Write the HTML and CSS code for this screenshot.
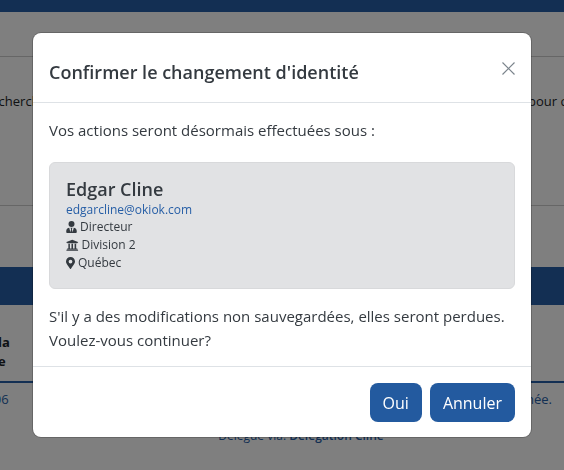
FILE: index.html
```html
<!DOCTYPE html>
<html lang="fr">
<head>
<meta charset="utf-8">
<title>Changement d'identité</title>
<link rel="stylesheet" href="styles.css">
</head>
<body>
<div class="page">
  <div class="topbar"></div>
  <div class="toolbar"></div>
  <div class="search-row">
    <span class="search-left">rechercher</span>
    <span class="search-right">pour changer</span>
  </div>
  <div class="spacer"></div>
  <div class="table-band"></div>
  <div class="table-head"><span class="col-label">la<br>e</span></div>
  <div class="table-row">
    <span class="cell-date">2006</span>
    <span class="cell-status">Délégation terminée.</span>
  </div>
  <div class="via">Délégué via: <b>Délégation Cline</b></div>
</div>

<div class="backdrop"></div>

<div class="modal" role="dialog" aria-modal="true">
  <header class="modal-header">
    <h5 class="modal-title">Confirmer le changement d'identité</h5>
    <button class="close" type="button" aria-label="Fermer">
      <svg width="13" height="13" viewBox="0 0 13 13"><path d="M.5.5l12 12M12.500.5l-12 12"/></svg>
    </button>
  </header>
  <div class="modal-body">
    <p class="intro">Vos actions seront désormais effectuées sous :</p>
    <div class="card">
      <div class="name">Edgar Cline</div>
      <a class="email" href="#">edgarcline@okiok.com</a>
      <div class="info">
        <svg class="ico" width="11" height="12" viewBox="0 0 448 512"><path d="M224 256a128 128 0 1 0 0-256 128 128 0 0 0 0 256zm95.800 32.600L272 480l-32-136 32-56h-96l32 56-32 136-47.800-191.400C56.900 292 0 350.300 0 422.400V464c0 26.500 21.500 48 48 48h352c26.500 0 48-21.500 48-48v-41.600c0-72.100-56.900-130.400-128.200-133.800z"/></svg>
        <span>Directeur</span>
      </div>
      <div class="info">
        <svg class="ico" width="12.500" height="12.500" viewBox="0 0 512 512"><path d="M496 128v16a8 8 0 0 1-8 8h-24v12c0 6.600-5.400 12-12 12H60c-6.600 0-12-5.400-12-12v-12H24a8 8 0 0 1-8-8v-16a8 8 0 0 1 4.900-7.400l232-88a8 8 0 0 1 6.200 0l232 88A8 8 0 0 1 496 128zm-24 304H40c-13.300 0-24 10.700-24 24v16a8 8 0 0 0 8 8h464a8 8 0 0 0 8-8v-16c0-13.300-10.700-24-24-24zM96 192v192H60c-6.600 0-12 5.400-12 12v20h416v-20c0-6.600-5.400-12-12-12h-36V192h-64v192h-64V192h-64v192h-64V192H96z"/></svg>
        <span>Division 2</span>
      </div>
      <div class="info">
        <svg class="ico" width="9" height="12" viewBox="0 0 384 512"><path d="M172.300 501.700C27 291 0 256 0 192 0 86 86 0 192 0s192 86 192 192c0 64-27 99-172.300 309.700-9.500 13.800-29.900 13.800-39.400 0zM192 272a80 80 0 1 0 0-160 80 80 0 0 0 0 160z"/></svg>
        <span>Québec</span>
      </div>
    </div>
    <p class="warning">S'il y a des modifications non sauvegardées, elles seront perdues. Voulez-vous continuer?</p>
  </div>
  <footer class="modal-footer">
    <button class="btn" type="button">Oui</button>
    <button class="btn" type="button">Annuler</button>
  </footer>
</div>
</body>
</html>
```
FILE: styles.css
```css
* { box-sizing: border-box; }
html, body { height: 100%; }
body {
  margin: 0;
  overflow: hidden;
  background: #fff;
  color: #212529;
  font-family: "Open Sans", sans-serif;
  font-size: 12px;
}
.page { width: 564px; height: 470px; overflow: hidden; font-size: 13px; }
.topbar { height: 12px; background: #265ea6; }
.toolbar { height: 45px; background: #fff; border-bottom: 1px solid #ccc; }
.search-row {
  height: 149px;
  padding-top: 35px;
  display: flex;
  line-height: 18px;
  white-space: nowrap;
  border-bottom: 1px solid #ccc;
}
.search-left { margin-left: -14px; }
.search-right { margin-left: auto; width: 36px; }
.spacer { height: 61px; }
.table-band { height: 38px; background: #265ea6; }
.table-head {
  height: 78px;
  border-bottom: 2px solid #265ea6;
  font-weight: 700;
  line-height: 19px;
  padding-top: 28px;
}
.col-label { display: block; margin-left: -2px; }
.table-row {
  display: flex;
  justify-content: space-between;
  height: 36px;
  padding-top: 7px;
  line-height: 18px;
  color: #265ea6;
  white-space: nowrap;
}
.cell-date { margin-left: -21px; }
.cell-status { margin-right: 12px; }
.via {
  margin-top: 8px;
  margin-left: 38px;
  text-align: center;
  font-size: 12px;
  line-height: 18px;
  color: #265ea6;
}
.via b { font-weight: 600; }
.backdrop {
  position: fixed;
  inset: 0;
  background: rgba(0, 0, 0, .5);
}
.modal {
  position: fixed;
  top: 33px;
  left: 33px;
  width: 498px;
  height: 404px;
  display: flex;
  flex-direction: column;
  background: #fff;
  border-radius: 8px;
  box-shadow: 0 0 0 1px rgba(0, 0, 0, .2);
}
.modal-header {
  flex: none;
  height: 70px;
  display: flex;
  align-items: flex-start;
  justify-content: space-between;
  padding: 26px 16px 0;
  border-bottom: 1px solid #dee2e6;
}
.modal-title {
  margin: 0;
  font-size: 18px;
  font-weight: 600;
  line-height: 27px;
  color: #343a40;
}
.close {
  margin: 3px 0 0;
  padding: 0;
  border: 0;
  background: none;
  width: 13px;
  height: 13px;
  display: block;
}
.close svg { display: block; }
.close path { stroke: #7b848c; stroke-width: 1.2; fill: none; }
.modal-body { flex: 1; min-height: 0; padding: 15px 16px 16px; }
.intro, .warning {
  margin: 0;
  font-size: 15px;
  line-height: 24px;
  color: #343a40;
}
.card {
  height: 127px;
  margin-top: 20px;
  padding: 14px 16px 13px;
  background: #e1e2e4;
  border: 1px solid #d8d9db;
  border-radius: 6px;
  color: #343a40;
}
.name { font-size: 18px; font-weight: 600; line-height: 24px; }
.email { display: block; color: #265ea6; text-decoration: none; line-height: 17px; }
.info { display: flex; align-items: center; gap: 3px; line-height: 18px; }
.ico { fill: #343a40; flex: none; }
.warning { margin-top: 15px; }
.modal-footer {
  flex: none;
  height: 71px;
  padding: 16px;
  display: flex;
  justify-content: flex-end;
  gap: 8px;
  border-top: 1px solid #dee2e6;
}
.btn {
  height: 39px;
  padding: 0 13px;
  border: 0;
  border-radius: 8px;
  background: #235a9f;
  color: #fff;
  font-family: inherit;
  font-size: 16px;
}
```
